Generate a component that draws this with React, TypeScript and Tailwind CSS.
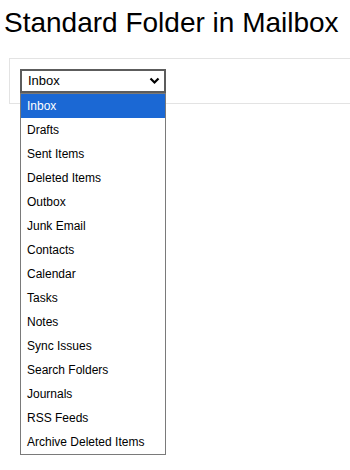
import React from "react";

const items = [
  "Inbox",
  "Drafts",
  "Sent Items",
  "Deleted Items",
  "Outbox",
  "Junk Email",
  "Contacts",
  "Calendar",
  "Tasks",
  "Notes",
  "Sync Issues",
  "Search Folders",
  "Journals",
  "RSS Feeds",
  "Archive Deleted Items",
];

export default function App() {
  return (
    <div className="w-[350px] h-[470px] bg-white overflow-hidden relative" style={{ fontFamily: '"Liberation Sans", Arial, sans-serif' }}>
      <h1 className="text-[28px] leading-[32px] text-black pl-[4px] pt-[7px] font-normal">
        Standard Folder in Mailbox
      </h1>
      <div className="mt-[19px] ml-[9px] border border-[#e3e3e3] h-[46px] w-[360px] relative">
        <div className="absolute left-[10px] top-[10px] w-[146px] h-[24px] border-2 border-[#5c5c5c] bg-white flex items-center justify-between pl-[6px] pr-[4px]">
          <span className="text-[13px] text-black">Inbox</span>
          <svg width="11" height="8" viewBox="0 0 11 8">
            <path d="M1.5 1.5 L5.5 5.5 L9.5 1.5" fill="none" stroke="#000" strokeWidth="2.2" />
          </svg>
        </div>
        <div className="absolute left-[10px] top-[34px] w-[146px] border border-[#7a7a7a] bg-white z-10">
          {items.map((it, i) => (
            <div
              key={it}
              className={
                "h-[24px] flex items-center pl-[6px] text-[12px] " +
                (i === 0 ? "bg-[#1b68d4] text-white" : "text-black")
              }
            >
              {it}
            </div>
          ))}
        </div>
      </div>
    </div>
  );
}
